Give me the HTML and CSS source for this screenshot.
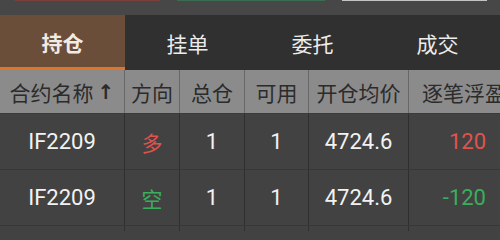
FILE: index.html
```html
<!DOCTYPE html>
<html lang="zh">
<head>
<meta charset="utf-8">
<link rel="stylesheet" href="styles.css">
</head>
<body>
<div class="topstrip">
  <span class="bar bar-red"></span>
  <span class="bar bar-green"></span>
  <span class="bar bar-grey"></span>
</div>
<div class="tabs">
  <div class="tab active">持仓</div>
  <div class="tab">挂单</div>
  <div class="tab">委托</div>
  <div class="tab">成交</div>
</div>
<div class="grid">
  <div class="row head">
    <div class="cell">合约名称 <span class="arrow">↑</span></div>
    <div class="cell">方向</div>
    <div class="cell">总仓</div>
    <div class="cell">可用</div>
    <div class="cell">开仓均价</div>
    <div class="cell last">逐笔浮盈</div>
  </div>
  <div class="row">
    <div class="cell">IF2209</div>
    <div class="cell red">多</div>
    <div class="cell">1</div>
    <div class="cell">1</div>
    <div class="cell">4724.6</div>
    <div class="cell last num red">120</div>
  </div>
  <div class="row">
    <div class="cell">IF2209</div>
    <div class="cell green">空</div>
    <div class="cell">1</div>
    <div class="cell">1</div>
    <div class="cell">4724.6</div>
    <div class="cell last num green">-120</div>
  </div>
  <div class="row">
    <div class="cell"></div>
    <div class="cell"></div>
    <div class="cell"></div>
    <div class="cell"></div>
    <div class="cell"></div>
    <div class="cell last"></div>
  </div>
</div>
</body>
</html>
```
FILE: styles.css
```css
html, body {
  margin: 0;
  padding: 0;
  background: #424242;
  overflow: hidden;
  width: 500px;
  height: 231px;
  font-family: Roboto, "Noto Sans CJK SC", sans-serif;
}
.topstrip {
  height: 15px;
  background: #474747;
  display: flex;
  align-items: flex-start;
  padding-left: 15px;
  gap: 17px;
}
.bar {
  display: block;
  height: 1px;
}
.bar-red { width: 145px; background: #7c3f3c; }
.bar-green { width: 148px; background: #3a6c52; }
.bar-grey { width: 145px; background: #c4c4c4; }
.tabs {
  display: flex;
  height: 55px;
  background: #303030;
}
.tab {
  flex: 0 0 125px;
  display: flex;
  align-items: center;
  justify-content: center;
  color: #ececec;
  font-size: 21px;
  font-family: "Noto Sans CJK SC", sans-serif;
  box-sizing: border-box;
}
.tab.active {
  background: #6b4e3a;
  border-bottom: 3px solid #e27428;
  padding-top: 2px;
  font-weight: bold;
  color: #f2ebe4;
}
.grid {
  width: 520px;
}
.row {
  display: grid;
  grid-template-columns: 125px 55px 65px 64px 100px 111px;
  height: 55px;
  border-bottom: 1px solid #373737;
  background: #424242;
}
.row.head {
  height: 43px;
  background: #8b8b8b;
  border-bottom: 1px solid #3a3a3a;
}
.cell {
  display: flex;
  align-items: center;
  justify-content: center;
  border-right: 1px solid #2f2f2f;
  color: #f2f2f2;
  font-size: 22px;
  white-space: nowrap;
  overflow: hidden;
}
.head .cell {
  color: #2b2b2b;
  font-size: 21px;
  font-family: "Noto Sans CJK SC", sans-serif;
  border-right-color: #686868;
}
.cell.last {
  border-right: none;
  justify-content: flex-start;
  padding-left: 13px;
}
.cell.num {
  justify-content: flex-end;
  padding-left: 0;
  padding-right: 34px;
}
.arrow {
  font-family: "DejaVu Sans", sans-serif;
  font-weight: bold;
  margin-left: 4px;
  font-size: 20px;
}
.red { color: #e0524e; }
.green { color: #3aae5c; }
.cell.red, .cell.green { font-family: "Noto Sans CJK SC", sans-serif; font-size: 21px; }
.cell.num { font-family: Roboto, sans-serif; font-size: 22px; }
```
